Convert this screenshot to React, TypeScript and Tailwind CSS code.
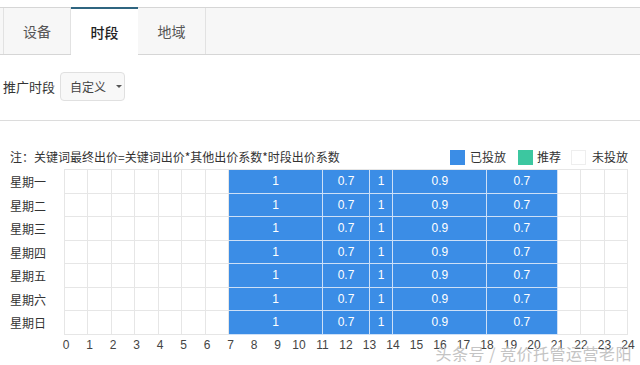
import React from 'react';

const days = ['星期一', '星期二', '星期三', '星期四', '星期五', '星期六', '星期日'];

// blue segments: [start hour, span, coefficient]
const segments: [number, number, string][] = [
  [7, 4, '1'],
  [11, 2, '0.7'],
  [13, 1, '1'],
  [14, 4, '0.9'],
  [18, 3, '0.7'],
];

const colStart: Record<number, string> = {
  7: 'col-start-8',
  11: 'col-start-12',
  13: 'col-start-14',
  14: 'col-start-15',
  18: 'col-start-19',
};
const colSpan: Record<number, string> = {
  1: 'col-span-1',
  2: 'col-span-2',
  3: 'col-span-3',
  4: 'col-span-4',
};

const DayRow: React.FC<{ label: string }> = ({ label }) => (
  <div className="flex h-[23.5px]">
    <div className="w-[64px] pl-[10px] text-[12px] leading-[23.5px] text-[#333]">{label}</div>
    <div className="relative w-[564px] h-full">
      <div className="grid grid-cols-[repeat(24,minmax(0,1fr))] h-full">
        {Array.from({ length: 24 }).map((_, i) => (
          <div key={i} className="border-r border-b border-[#e6e6e6]" />
        ))}
      </div>
      <div className="absolute inset-0 grid grid-cols-[repeat(24,minmax(0,1fr))]">
        {segments.map(([s, n, v]) => (
          <div
            key={s}
            className={`${colStart[s]} ${colSpan[n]} bg-[#3b8de6] border-r border-b border-[#cde0f7] flex items-center justify-center text-white text-[12px] font-['Liberation_Sans',Arial,sans-serif]`}
          >
            {v}
          </div>
        ))}
      </div>
    </div>
  </div>
);

const App: React.FC = () => {
  const tabs = ['设备', '时段', '地域'];
  return (
    <div className="relative w-[640px] h-[365px] bg-white overflow-hidden font-['Noto_Sans_CJK_SC','Microsoft_YaHei',sans-serif] text-[#333]">
      {/* tabs */}
      <div className="mt-[7px] h-[48px] flex bg-[#f7f7f7] border-t border-b border-[#d6d6d6] pl-[3px]">
        {tabs.map((t, i) =>
          i === 1 ? (
            <div
              key={t}
              className="w-[67px] h-[48px] -mt-px bg-white border-t-2 border-[#2f6580] flex items-center justify-center text-[14px] font-medium text-[#222]"
            >
              {t}
            </div>
          ) : (
            <div
              key={t}
              className={`w-[68px] h-full flex items-center justify-center text-[14px] text-[#555] border-r border-[#e2e2e2] ${i === 0 ? 'border-l' : ''}`}
            >
              {t}
            </div>
          )
        )}
      </div>

      {/* 推广时段 */}
      <div className="mt-[17px] flex items-center h-[29px] pl-[3px]">
        <span className="w-[57px] text-[13px] text-[#333]">推广时段</span>
        <div className="w-[65px] h-[29px] border border-[#e0e0e0] bg-[#f8f8f8] rounded-sm flex items-center pl-[9px] text-[12px] text-[#444]">
          自定义
          <span className="ml-[10px] w-0 h-0 border-l-[3px] border-r-[3px] border-t-[3px] border-l-transparent border-r-transparent border-t-[#555]" />
        </div>
      </div>

      <div className="mt-[19px] border-t border-[#dcdcdc]" />

      {/* note + legend */}
      <div className="mt-[26px] h-[20px] flex items-center justify-between pl-[10px] pr-[12px] text-[12px]">
        <span>注：关键词最终出价=关键词出价*其他出价系数*时段出价系数</span>
        <div className="flex items-center">
          <span className="w-[15px] h-[15px] bg-[#3b8de6]" />
          <span className="ml-[5px]">已投放</span>
          <span className="ml-[12px] w-[15px] h-[15px] bg-[#3cc7a0]" />
          <span className="ml-[4px]">推荐</span>
          <span className="ml-[10px] w-[15px] h-[15px] bg-white border border-[#eee]" />
          <span className="ml-[6px]">未投放</span>
        </div>
      </div>

      {/* grid */}
      <div className="mt-[2px]">
        <div className="ml-[64px] w-[564px] border-t border-[#e6e6e6]" />
        <div className="[&>div>div:nth-child(2)]:border-l [&>div>div:nth-child(2)]:border-[#e6e6e6]">
          {days.map((d) => (
            <DayRow key={d} label={d} />
          ))}
        </div>
        <div className="relative ml-[64px] w-[564px] h-[18px] text-[12px] text-[#444] font-['Liberation_Sans',Arial,sans-serif]">
          {Array.from({ length: 25 }).map((_, i) => (
            <span
              key={i}
              className="absolute top-[1px] -translate-x-1/2"
              style={{ left: i * 23.5 + (i < 10 ? 2 : 0) }}
            >
              {i}
            </span>
          ))}
        </div>
      </div>

      <div className="absolute right-[8px] bottom-[2px] text-[16px] leading-[20px] text-[#c4c4c4] tracking-[0.5px]">
        头条号 / 竞价托管运营老阳
      </div>
    </div>
  );
};

export default App;
